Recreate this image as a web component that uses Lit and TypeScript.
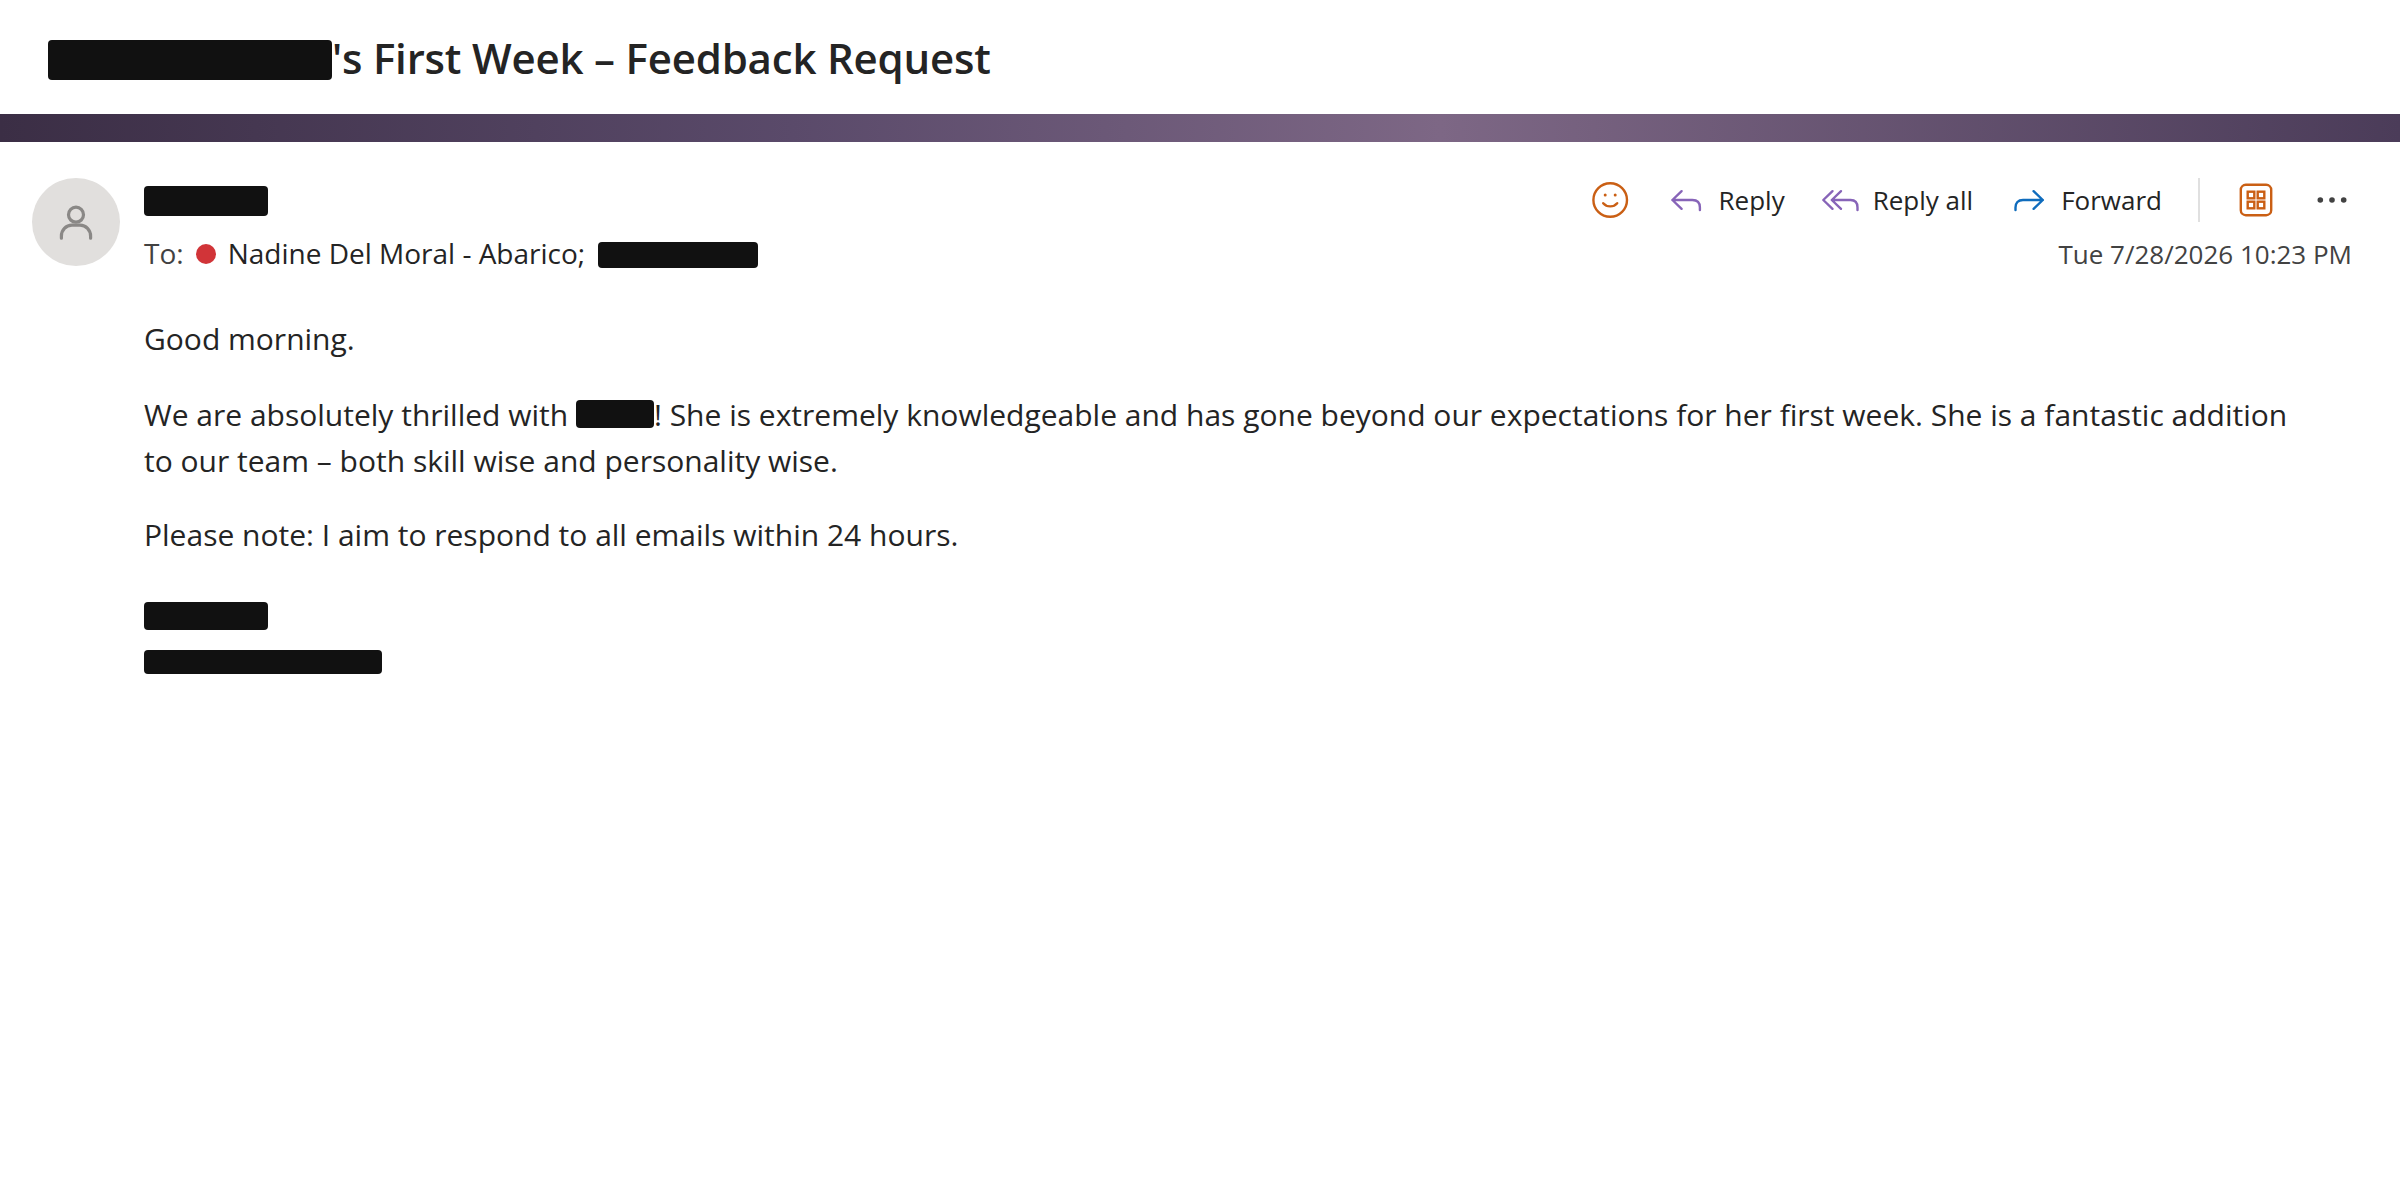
import { LitElement, html, css } from "lit";
import { customElement, property } from "lit/decorators.js";

// Black bar that covers a private value
@customElement("redacted-bar")
export class RedactedBar extends LitElement {
  @property({ type: Number }) width = 100;
  @property({ type: Number }) height = 28;

  static styles = css`
    :host {
      display: inline-block;
      flex: none;
    }
    .bar {
      display: block;
      background: #111111;
      border-radius: 4px;
    }
  `;

  render() {
    return html`<span class="bar" style="width:${this.width}px;height:${this.height}px"></span>`;
  }
}

@customElement("message-actions")
export class MessageActions extends LitElement {
  static styles = css`
    :host {
      display: flex;
      align-items: center;
      height: 44px;
      font-size: 26px;
      line-height: 36px;
      color: #242424;
    }
    .action {
      display: flex;
      align-items: center;
      gap: 12px;
      height: 44px;
    }
    svg {
      display: block;
      flex: none;
      fill: none;
      stroke-width: 2.4;
      stroke-linecap: round;
      stroke-linejoin: round;
    }
    .smile,
    .reply,
    .reply-all,
    .forward,
    .apps {
      margin-right: 36px;
    }
    .orange {
      stroke: #ca5f14;
    }
    .purple {
      stroke: #8764b8;
    }
    .blue {
      stroke: #0f6cbd;
    }
    .dot {
      fill: #ca5f14;
      stroke: none;
    }
    .tile {
      stroke-linejoin: miter;
    }
    .divider {
      width: 2px;
      height: 44px;
      background: #e0e0e0;
      margin-right: 36px;
    }
    .more {
      fill: #424242;
    }
  `;

  render() {
    return html`
      <span class="action smile">
        <svg class="orange" width="40" height="40" viewBox="0 0 40 40">
          <circle cx="19.2" cy="20" r="16.8" />
          <circle class="dot" cx="14.2" cy="15" r="1.5" />
          <circle class="dot" cx="24.2" cy="15" r="1.5" />
          <path d="M12.2 23.2c3.5 4.2 10.5 4.2 14 0" />
        </svg>
      </span>
      <span class="action reply">
        <svg class="purple" width="40" height="40" viewBox="0 0 40 40">
          <path d="M14.6 11.2L5.4 20l9.2 8.8M5.4 20H25.4c5 0 7.5 3 7.5 7.5V30" />
        </svg>
        <span>Reply</span>
      </span>
      <span class="action reply-all">
        <svg class="purple" width="40" height="40" viewBox="0 0 40 40">
          <path d="M11.5 11.2L2.3 20l9.2 8.8M20 11.2L10.8 20l9.2 8.8M10.8 20H29.5c5 0 7 3 7 7.5V30" />
        </svg>
        <span>Reply all</span>
      </span>
      <span class="action forward">
        <svg class="blue" width="40" height="40" viewBox="0 0 40 40">
          <path d="M24.6 11.2l9.2 8.8-9.2 8.8M33.8 20H14c-5 0-7.5 3-7.5 7.5V30" />
        </svg>
        <span>Forward</span>
      </span>
      <span class="divider"></span>
      <span class="action apps">
        <svg class="orange" width="40" height="40" viewBox="0 0 40 40">
          <rect x="4.8" y="4.8" width="30.4" height="30.4" rx="5" />
          <rect class="tile" x="11.7" y="11.7" width="6.6" height="6.6" />
          <rect class="tile" x="21.7" y="11.7" width="6.6" height="6.6" />
          <rect class="tile" x="11.7" y="21.7" width="6.6" height="6.6" />
          <rect class="tile" x="21.7" y="21.7" width="6.6" height="6.6" />
        </svg>
      </span>
      <span class="action">
        <svg class="more" width="40" height="40" viewBox="0 0 40 40">
          <circle cx="8.3" cy="20" r="2.8" />
          <circle cx="20" cy="20" r="2.8" />
          <circle cx="31.7" cy="20" r="2.8" />
        </svg>
      </span>
    `;
  }
}

@customElement("app-root")
export class AppRoot extends LitElement {
  static styles = css`
    :host {
      display: block;
      min-height: 1200px;
      background: #ffffff;
      color: #242424;
      font-family: "Open Sans", sans-serif;
    }
    .subject {
      display: flex;
      align-items: center;
      box-sizing: border-box;
      height: 114px;
      margin: 0;
      padding: 2px 48px 0;
      font-size: 42px;
      font-weight: 600;
      line-height: 58px;
      letter-spacing: -0.2px;
    }
    .subject redacted-bar {
      margin-top: 4px;
    }
    .banner {
      height: 28px;
      background: linear-gradient(90deg, #3b2e45 0%, #5a4a6a 33%, #7d6785 60%, #4b3c59 100%);
    }
    .message {
      display: flex;
      gap: 24px;
      padding: 36px 48px 0 32px;
    }
    .avatar {
      display: flex;
      align-items: center;
      justify-content: center;
      flex: none;
      width: 88px;
      height: 88px;
      border-radius: 50%;
      background: #e1dfdd;
    }
    .avatar svg {
      fill: none;
      stroke: #8a8886;
      stroke-width: 3.2;
      stroke-linecap: round;
    }
    .content {
      flex: 1;
      min-width: 0;
    }
    .row {
      display: flex;
      align-items: center;
      justify-content: space-between;
    }
    .row.sender {
      height: 44px;
    }
    .row.sender redacted-bar {
      margin-top: 2px;
    }
    .row.details {
      height: 40px;
      margin-top: 12px;
    }
    .recipients {
      display: flex;
      align-items: center;
      font-size: 28px;
      line-height: 38px;
    }
    .recipients .label,
    .recipients .recipient {
      padding-bottom: 2px;
    }
    .recipients redacted-bar {
      margin-top: 2px;
    }
    .label {
      color: #424242;
      margin-right: 12px;
    }
    .presence {
      width: 20px;
      height: 20px;
      border-radius: 50%;
      background: #d13438;
      margin-right: 12px;
    }
    .recipient {
      margin-right: 13px;
    }
    .date {
      font-size: 26px;
      line-height: 40px;
      color: #424242;
    }
    .body {
      margin-top: 42px;
      padding-right: 40px;
      font-size: 30px;
      line-height: 46px;
    }
    .body p {
      margin: 0 0 28px;
    }
    .body .intro {
      margin-bottom: 30px;
    }
    .body p redacted-bar {
      height: 28px;
      vertical-align: -2px;
    }
    .signature {
      display: flex;
      flex-direction: column;
      align-items: flex-start;
      gap: 20px;
      margin-top: 44px;
    }
  `;

  render() {
    return html`
      <h1 class="subject">
        <redacted-bar width="284" height="40"></redacted-bar>
        <span>'s First Week – Feedback Request</span>
      </h1>
      <div class="banner"></div>
      <section class="message">
        <div class="avatar">
          <svg width="40" height="40" viewBox="0 0 40 40">
            <circle cx="20" cy="12.7" r="7.5" />
            <path d="M5.4 36.2v-2c0-6 4.5-11 10.6-11h8c6 0 10.6 5 10.6 11v2" />
          </svg>
        </div>
        <div class="content">
          <div class="row sender">
            <redacted-bar width="124" height="30"></redacted-bar>
            <message-actions></message-actions>
          </div>
          <div class="row details">
            <div class="recipients">
              <span class="label">To:</span>
              <span class="presence"></span>
              <span class="recipient">Nadine Del Moral - Abarico;</span>
              <redacted-bar width="160" height="26"></redacted-bar>
            </div>
            <span class="date">Tue 7/28/2026 10:23 PM</span>
          </div>
          <div class="body">
            <p class="intro">Good morning.</p>
            <p>We are absolutely thrilled with <redacted-bar width="78" height="28"></redacted-bar>! She is extremely knowledgeable and has gone beyond our expectations for her first week. She is a fantastic addition to our team – both skill wise and personality wise.</p>
            <p>Please note: I aim to respond to all emails within 24 hours.</p>
            <div class="signature">
              <redacted-bar width="124" height="28"></redacted-bar>
              <redacted-bar width="238" height="24"></redacted-bar>
            </div>
          </div>
        </div>
      </section>
    `;
  }
}
